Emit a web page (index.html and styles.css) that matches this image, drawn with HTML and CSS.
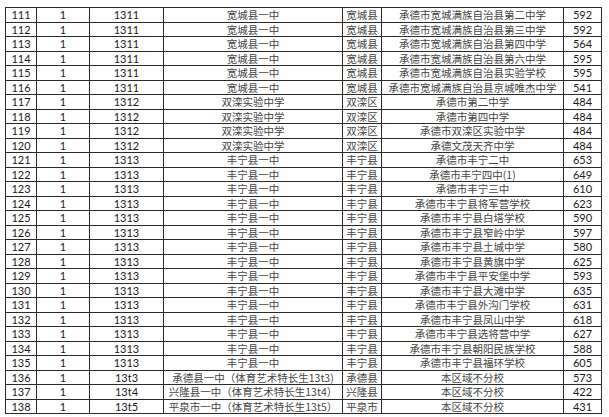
FILE: index.html
```html
<!DOCTYPE html>
<html lang="zh">
<head>
<meta charset="utf-8">
<link rel="stylesheet" href="styles.css">
</head>
<body>
<table class="sheet">
<colgroup>
<col class="c1"><col class="c2"><col class="c3"><col class="c4"><col class="c5"><col class="c6"><col class="c7">
</colgroup>
<tbody>
<tr><td class="n">111</td><td class="n">1</td><td class="n">1311</td><td>宽城县一中</td><td>宽城县</td><td>承德市宽城满族自治县第二中学</td><td class="n">592</td></tr>
<tr><td class="n">112</td><td class="n">1</td><td class="n">1311</td><td>宽城县一中</td><td>宽城县</td><td>承德市宽城满族自治县第三中学</td><td class="n">592</td></tr>
<tr><td class="n">113</td><td class="n">1</td><td class="n">1311</td><td>宽城县一中</td><td>宽城县</td><td>承德市宽城满族自治县第四中学</td><td class="n">564</td></tr>
<tr><td class="n">114</td><td class="n">1</td><td class="n">1311</td><td>宽城县一中</td><td>宽城县</td><td>承德市宽城满族自治县第六中学</td><td class="n">595</td></tr>
<tr><td class="n">115</td><td class="n">1</td><td class="n">1311</td><td>宽城县一中</td><td>宽城县</td><td>承德市宽城满族自治县实验学校</td><td class="n">595</td></tr>
<tr><td class="n">116</td><td class="n">1</td><td class="n">1311</td><td>宽城县一中</td><td>宽城县</td><td>承德市宽城满族自治县京城唯杰中学</td><td class="n">541</td></tr>
<tr><td class="n">117</td><td class="n">1</td><td class="n">1312</td><td>双滦实验中学</td><td>双滦区</td><td>承德市第二中学</td><td class="n">484</td></tr>
<tr><td class="n">118</td><td class="n">1</td><td class="n">1312</td><td>双滦实验中学</td><td>双滦区</td><td>承德市第四中学</td><td class="n">484</td></tr>
<tr><td class="n">119</td><td class="n">1</td><td class="n">1312</td><td>双滦实验中学</td><td>双滦区</td><td>承德市双滦区实验中学</td><td class="n">484</td></tr>
<tr><td class="n">120</td><td class="n">1</td><td class="n">1312</td><td>双滦实验中学</td><td>双滦区</td><td>承德文茂天齐中学</td><td class="n">484</td></tr>
<tr><td class="n">121</td><td class="n">1</td><td class="n">1313</td><td>丰宁县一中</td><td>丰宁县</td><td>承德市丰宁二中</td><td class="n">653</td></tr>
<tr><td class="n">122</td><td class="n">1</td><td class="n">1313</td><td>丰宁县一中</td><td>丰宁县</td><td>承德市丰宁四中(1)</td><td class="n">649</td></tr>
<tr><td class="n">123</td><td class="n">1</td><td class="n">1313</td><td>丰宁县一中</td><td>丰宁县</td><td>承德市丰宁三中</td><td class="n">610</td></tr>
<tr><td class="n">124</td><td class="n">1</td><td class="n">1313</td><td>丰宁县一中</td><td>丰宁县</td><td>承德市丰宁县将军营学校</td><td class="n">623</td></tr>
<tr><td class="n">125</td><td class="n">1</td><td class="n">1313</td><td>丰宁县一中</td><td>丰宁县</td><td>承德市丰宁县白塔学校</td><td class="n">590</td></tr>
<tr><td class="n">126</td><td class="n">1</td><td class="n">1313</td><td>丰宁县一中</td><td>丰宁县</td><td>承德市丰宁县窄岭中学</td><td class="n">597</td></tr>
<tr><td class="n">127</td><td class="n">1</td><td class="n">1313</td><td>丰宁县一中</td><td>丰宁县</td><td>承德市丰宁县土城中学</td><td class="n">580</td></tr>
<tr><td class="n">128</td><td class="n">1</td><td class="n">1313</td><td>丰宁县一中</td><td>丰宁县</td><td>承德市丰宁县黄旗中学</td><td class="n">625</td></tr>
<tr><td class="n">129</td><td class="n">1</td><td class="n">1313</td><td>丰宁县一中</td><td>丰宁县</td><td>承德市丰宁县平安堡中学</td><td class="n">593</td></tr>
<tr><td class="n">130</td><td class="n">1</td><td class="n">1313</td><td>丰宁县一中</td><td>丰宁县</td><td>承德市丰宁县大滩中学</td><td class="n">635</td></tr>
<tr><td class="n">131</td><td class="n">1</td><td class="n">1313</td><td>丰宁县一中</td><td>丰宁县</td><td>承德市丰宁县外沟门学校</td><td class="n">631</td></tr>
<tr><td class="n">132</td><td class="n">1</td><td class="n">1313</td><td>丰宁县一中</td><td>丰宁县</td><td>承德市丰宁县凤山中学</td><td class="n">618</td></tr>
<tr><td class="n">133</td><td class="n">1</td><td class="n">1313</td><td>丰宁县一中</td><td>丰宁县</td><td>承德市丰宁县选将营中学</td><td class="n">627</td></tr>
<tr><td class="n">134</td><td class="n">1</td><td class="n">1313</td><td>丰宁县一中</td><td>丰宁县</td><td>承德市丰宁县朝阳民族学校</td><td class="n">588</td></tr>
<tr><td class="n">135</td><td class="n">1</td><td class="n">1313</td><td>丰宁县一中</td><td>丰宁县</td><td>承德市丰宁县福环学校</td><td class="n">605</td></tr>
<tr><td class="n">136</td><td class="n">1</td><td class="n">13t3</td><td>承德县一中（体育艺术特长生13t3)</td><td>承德县</td><td>本区域不分校</td><td class="n">573</td></tr>
<tr><td class="n">137</td><td class="n">1</td><td class="n">13t4</td><td>兴隆县一中（体育艺术特长生13t4）</td><td>兴隆县</td><td>本区域不分校</td><td class="n">422</td></tr>
<tr><td class="n">138</td><td class="n">1</td><td class="n">13t5</td><td>平泉市一中（体育艺术特长生13t5）</td><td>平泉市</td><td>本区域不分校</td><td class="n">431</td></tr>
</tbody>
</table>
</body>
</html>
```
FILE: styles.css
```css
html, body {
  margin: 0;
  padding: 0;
  background: #ffffff;
}
body {
  padding: 7px 0 0 5px;
}
.sheet {
  border-collapse: collapse;
  table-layout: fixed;
  width: 596px;
  font-family: "Noto Sans CJK SC", "Noto Sans", sans-serif;
  font-size: 10.5px;
  color: #444;
}
.c1 { width: 31px; }
.c2 { width: 53px; }
.c3 { width: 74px; }
.c4 { width: 179px; }
.c5 { width: 39px; }
.c6 { width: 182px; }
.c7 { width: 38px; }
.sheet td {
  border: 1px solid #2a2a2a;
  height: 13.5px;
  padding: 0;
  text-align: center;
  vertical-align: middle;
  white-space: nowrap;
  overflow: hidden;
  line-height: 13px;
}
.sheet td.n {
  font-family: Lato, "Liberation Sans", sans-serif;
  font-size: 11px;
  color: #1a1a1a;
}
```
